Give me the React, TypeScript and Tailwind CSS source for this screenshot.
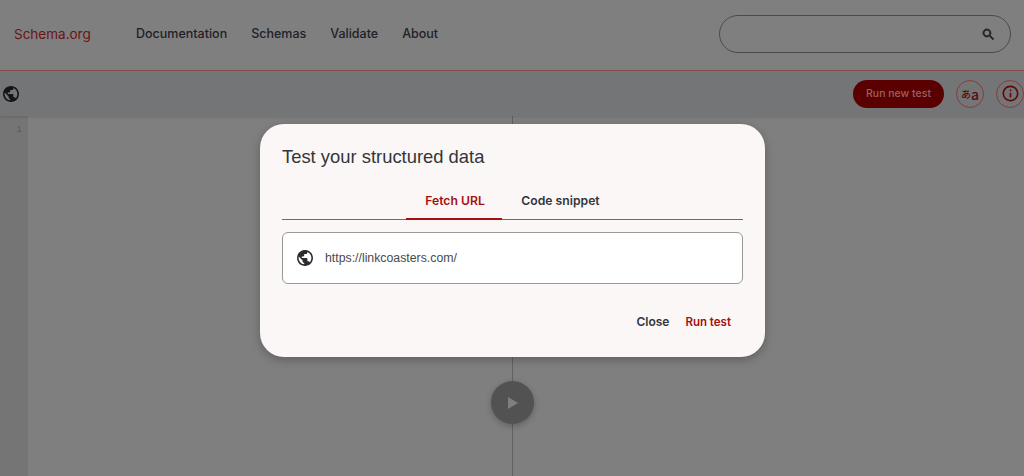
const sans = 'font-["Inter",sans-serif]';

const GlobeIcon = ({ className }: { className: string }) => (
	<svg viewBox="2 2 20 20" fill="currentColor" className={className}>
		<path d="M12 2C6.48 2 2 6.48 2 12s4.48 10 10 10 10-4.48 10-10S17.52 2 12 2zm-1 17.93c-3.95-.49-7-3.85-7-7.93 0-.62.08-1.21.21-1.79L9 15v1c0 1.1.9 2 2 2v1.93zm6.9-2.54c-.26-.81-1-1.39-1.9-1.39h-1v-3c0-.55-.45-1-1-1H8v-2h2c.55 0 1-.45 1-1V7h2c1.1 0 2-.9 2-2v-.41c2.93 1.19 5 4.06 5 7.41 0 2.08-.8 3.97-2.1 5.39z" />
	</svg>
);

const SearchIcon = () => (
	<svg viewBox="0 0 24 24" fill="currentColor" className="h-[15px] w-[15px]" stroke="currentColor" strokeWidth="1">
		<path d="M15.5 14h-.79l-.28-.27C15.41 12.59 16 11.11 16 9.5 16 5.91 13.09 3 9.5 3S3 5.91 3 9.5 5.91 16 9.5 16c1.61 0 3.09-.59 4.23-1.57l.27.28v.79l5 4.99L20.49 19l-4.99-5zm-6 0C7.01 14 5 11.99 5 9.5S7.01 5 9.5 5 14 7.01 14 9.5 11.99 14 9.5 14z" />
	</svg>
);

const InfoIcon = () => (
	<svg viewBox="0 0 24 24" fill="currentColor" className="h-[19px] w-[19px]">
		<path d="M11 7h2v2h-2V7zm0 4h2v6h-2v-6zm1-9C6.48 2 2 6.48 2 12s4.48 10 10 10 10-4.48 10-10S17.52 2 12 2zm0 18c-4.41 0-8-3.59-8-8s3.59-8 8-8 8 3.59 8 8-3.59 8-8 8z" />
	</svg>
);

const navItems = ['Documentation', 'Schemas', 'Validate', 'About'];

export default function App() {
	return (
		<div className={`relative flex h-[476px] w-[1024px] flex-col overflow-hidden bg-[#7f7f7f] ${sans}`}>
			{/* Header */}
			<header className="flex h-[71px] shrink-0 items-center border-b border-[#864f4f] bg-[#7f7f7f] pr-[13px] pb-[2px] pl-[14px]">
				<a className="w-[122px] text-[13.5px] text-[#6b1414]">Schema.org</a>
				<nav className="flex gap-[24px] text-[12.5px] font-medium text-[#1f2126]">
					{navItems.map((item) => (
						<a key={item}>{item}</a>
					))}
				</nav>
				<div className="ml-auto flex h-[38px] w-[292px] items-center justify-end rounded-full border border-[#4b4b4b] pr-[14px] text-[#1f2024]">
					<SearchIcon />
				</div>
			</header>

			{/* Toolbar */}
			<div className="z-10 flex h-[45px] shrink-0 items-center bg-[#747577] pl-[3px] shadow-[0_1px_3px_rgba(0,0,0,0.15)]">
				<GlobeIcon className="h-[16px] w-[16px] text-[#14151a]" />
				<button className="ml-auto h-[28px] w-[91px] rounded-full bg-[#5a0000] text-[10.5px] font-medium text-[#9a6060]">
					Run new test
				</button>
				<button className='ml-[12px] flex h-[28px] w-[28px] items-center justify-center rounded-full border border-[#853d3d] font-["Noto_Sans_CJK_JP",sans-serif] font-medium text-[#5f0808]'>
					<span className="text-[10px]">あ</span>
					<span className="text-[14px] leading-none">a</span>
				</button>
				<button className="ml-[12px] flex h-[28px] w-[28px] items-center justify-center rounded-full border border-[#853d3d] text-[#5f0808]">
					<InfoIcon />
				</button>
			</div>

			{/* Editor */}
			<div className="relative flex min-h-0 flex-1">
				<div className="h-full w-[28px] bg-[#757575] pt-[8px] pr-[6px] text-right font-['Liberation_Mono',monospace] text-[9px] text-[#5c5c5c]">
					1
				</div>
				<div className="h-full w-[485px] border-r border-[#626262]" />
				<button className="absolute top-[265px] left-[491px] flex h-[43px] w-[43px] items-center justify-center rounded-full bg-[#525252] shadow-[0_2px_6px_rgba(0,0,0,0.25)]">
					<svg viewBox="0 0 10 12" fill="currentColor" className="ml-[1px] h-[12px] w-[10px] text-[#7f7f7f]">
						<path d="M0 0l10 6-10 6z" />
					</svg>
				</button>
			</div>

			{/* Dialog */}
			<div className="absolute top-[124px] left-[260px] z-20 flex h-[233px] w-[505px] flex-col rounded-[24px] bg-[#fbf7f6] px-[22px] shadow-[0_3px_10px_rgba(0,0,0,0.25)]">
				<h2 className="mt-[22px] font-['Liberation_Sans',sans-serif] text-[18.4px] leading-[22px] text-[#33353a]">
					Test your structured data
				</h2>
				<div className="mt-[18px] flex h-[34px] justify-center border-b border-[#6e6a6e] text-[12.2px] font-semibold">
					<button className="-mb-[1px] h-[34px] w-[96px] border-b-2 border-[#a51010] pb-[2px] pl-[2px] text-[#a51010]">Fetch URL</button>
					<button className="w-[117px] pb-[3px] text-[#33353a]">Code snippet</button>
				</div>
				<div className="mt-[12px] flex h-[52px] items-center rounded-[6px] border border-[#9a9797] bg-white pl-[14px]">
					<GlobeIcon className="h-[16px] w-[16px] text-[#2a2c31]" />
					<span className="ml-[12px] font-['Liberation_Sans',sans-serif] text-[12.3px] text-[#4a4a4d]">https://linkcoasters.com/</span>
				</div>
				<div className="mt-[30px] flex items-baseline justify-end gap-[16px] pr-[12px] font-semibold">
					<button className="text-[12px] leading-[16px] text-[#33353a]">Close</button>
					<button className="text-[11.5px] leading-[16px] text-[#a51010]">Run test</button>
				</div>
			</div>
		</div>
	);
}
